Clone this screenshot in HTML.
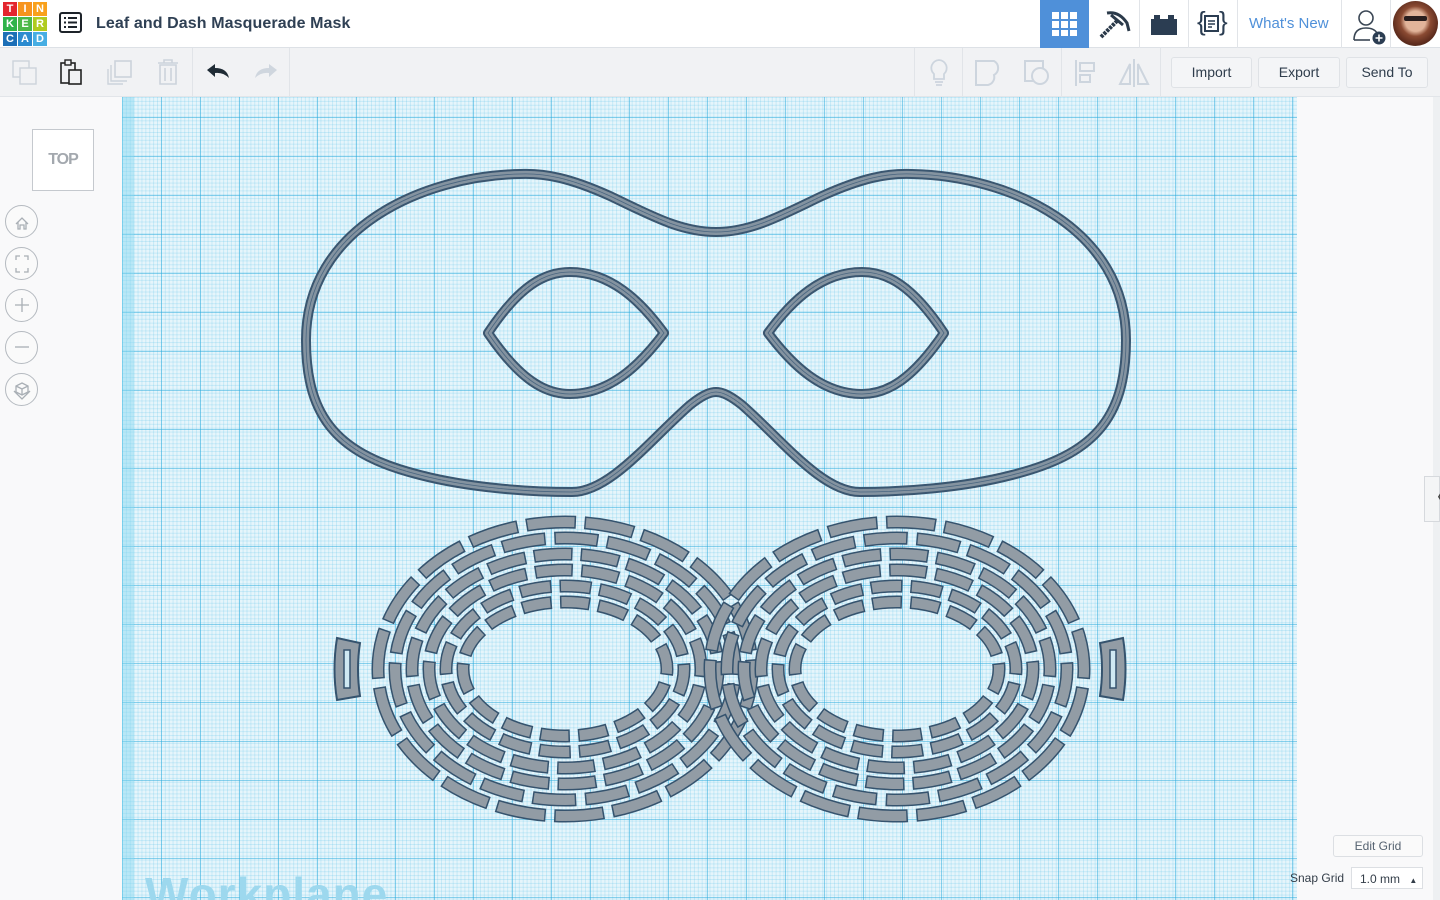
<!DOCTYPE html>
<html><head><meta charset="utf-8"><style>
*{margin:0;padding:0;box-sizing:border-box}
body{width:1440px;height:900px;overflow:hidden;background:#f9f9fa;font-family:"Liberation Sans",sans-serif;position:relative}
#top{position:absolute;left:0;top:0;width:1440px;height:48px;background:#fff;border-bottom:1px solid #dde1e6}
#tb{position:absolute;left:0;top:48px;width:1440px;height:49px;background:#f1f2f4;border-bottom:1px solid #e2e5e9}
.logo{position:absolute;left:3px;top:2px;display:grid;grid-template-columns:repeat(3,14px);grid-gap:1px}
.logo div{width:14px;height:14px;color:#fff;font:bold 11px "Liberation Sans",sans-serif;text-align:center;line-height:14px}
.title{position:absolute;left:96px;top:15px;font-size:16px;font-weight:bold;color:#2f4054;letter-spacing:.1px}
.btn{position:absolute;top:57px;height:31px;border:1px solid #dfe2e6;border-radius:3px;background:#f4f5f7;font-size:14px;color:#2f3d4c;text-align:center;line-height:29px}
.vd{position:absolute;width:1px;background:#e1e4e8}
#wp{position:absolute;left:122px;top:97px;width:1175px;height:803px;background-color:#e6f5fb;
background-image:
linear-gradient(90deg,rgba(40,170,220,.5) 1px,transparent 1px),
linear-gradient(rgba(40,170,220,.5) 1px,transparent 1px),
linear-gradient(90deg,rgba(80,190,230,.22) 1px,transparent 1px),
linear-gradient(rgba(80,190,230,.22) 1px,transparent 1px);
background-size:39px 39px,39px 39px,3.9px 3.9px,3.9px 3.9px;
background-position:39px 20px,39px 20px,0 0,0 0;overflow:hidden}
.circ{position:absolute;left:5px;width:33px;height:33px;border:1px solid #b5bac0;border-radius:50%;background:#fafafa}
</style></head><body>
<div id="top">
<div class="logo">
<div style="background:#e3262e">T</div><div style="background:#f7941d">I</div><div style="background:#f9a11b">N</div>
<div style="background:#2fb34a">K</div><div style="background:#4cb848">E</div><div style="background:#b0cb1f">R</div>
<div style="background:#1c6fb7">C</div><div style="background:#2b8bd0">A</div><div style="background:#47aee3">D</div>
</div>
<svg style="position:absolute;left:59px;top:12px" width="24" height="22" viewBox="0 0 24 22"><rect x="1" y="1" width="21" height="19" rx="2" fill="none" stroke="#1d232a" stroke-width="2"/><g fill="#1d232a"><rect x="5" y="5" width="2" height="2"/><rect x="9" y="5" width="9" height="2"/><rect x="5" y="9.5" width="2" height="2"/><rect x="9" y="9.5" width="9" height="2"/><rect x="5" y="14" width="2" height="2"/><rect x="9" y="14" width="9" height="2"/></g></svg>
<div class="title">Leaf and Dash Masquerade Mask</div>
<div style="position:absolute;left:1040px;top:0;width:49px;height:48px;background:#4f90d9"></div>
<svg style="position:absolute;left:1052px;top:12px" width="25" height="24"><g fill="#fff"><rect x="0" y="0" width="7" height="7"/><rect x="9" y="0" width="7" height="7"/><rect x="18" y="0" width="7" height="7"/><rect x="0" y="9" width="7" height="7"/><rect x="9" y="9" width="7" height="7"/><rect x="18" y="9" width="7" height="7"/><rect x="0" y="18" width="7" height="6"/><rect x="9" y="18" width="7" height="6"/><rect x="18" y="18" width="7" height="6"/></g></svg>
<svg style="position:absolute;left:1099px;top:9px" width="32" height="30"><path d="M2 28 L18 12" stroke="#2b3a4a" stroke-width="4" stroke-dasharray="3 1"/><path d="M8 4 Q20 2 28 14 L30 22 M12 6 L24 16" stroke="#2b3a4a" stroke-width="3" fill="none"/></svg>
<div class="vd" style="left:1139px;top:0;height:48px"></div>
<svg style="position:absolute;left:1151px;top:14px" width="26" height="21"><path d="M0 5h3v-4h6v4h8v-4h6v4h3v16h-26z" fill="#2b3d52"/></svg>
<div class="vd" style="left:1188px;top:0;height:48px"></div>
<div style="position:absolute;left:1197px;top:6px;font-size:26px;color:#2b3d52">{</div>
<div style="position:absolute;left:1219px;top:6px;font-size:26px;color:#2b3d52">}</div>
<svg style="position:absolute;left:1204px;top:15px" width="16" height="18"><rect x="1" y="1" width="13" height="15" fill="none" stroke="#2b3d52" stroke-width="2"/><path d="M4 6h7M4 9h7M4 12h4" stroke="#2b3d52" stroke-width="1.5"/></svg>
<div class="vd" style="left:1237px;top:0;height:48px"></div>
<div style="position:absolute;left:1249px;top:15px;font-size:15px;color:#4f90d9">What's New</div>
<div class="vd" style="left:1341px;top:0;height:48px"></div>
<svg style="position:absolute;left:1352px;top:9px" width="36" height="36"><circle cx="14" cy="9" r="7" fill="none" stroke="#3a4654" stroke-width="1.6"/><path d="M2 31 Q2 19 14 19 Q22 19 25 24" fill="none" stroke="#3a4654" stroke-width="1.6"/><path d="M2 31h16" stroke="#3a4654" stroke-width="1.6"/><circle cx="27" cy="29" r="6.5" fill="#2b3d52"/><path d="M27 25.5v7M23.5 29h7" stroke="#fff" stroke-width="1.6"/></svg>
<div class="vd" style="left:1390px;top:0;height:48px"></div>
<div style="position:absolute;left:1393px;top:1px;width:45px;height:45px;border-radius:50%;background:radial-gradient(circle at 50% 45%,#e2b49a 0 30%,#8a4a32 45%,#5a2a1c 70%,#7d8a6a 100%)"></div>
<div style="position:absolute;left:1404px;top:16px;width:23px;height:5px;background:#2a1e1e;border-radius:2px"></div>
</div>
<div id="tb">
<svg style="position:absolute;left:12px;top:12px" width="26" height="26"><rect x="1" y="1" width="16" height="16" fill="none" stroke="#ccd3db" stroke-width="1.4"/><rect x="8" y="8" width="16" height="16" fill="#f1f2f4" stroke="#ccd3db" stroke-width="1.4"/></svg>
<svg style="position:absolute;left:59px;top:10px" width="26" height="28"><rect x="2" y="5" width="14" height="20" fill="none" stroke="#222" stroke-width="1.6"/><rect x="6" y="2" width="6" height="5" fill="#f1f2f4" stroke="#222" stroke-width="1.4"/><rect x="10" y="12" width="12" height="14" fill="#f1f2f4" stroke="#222" stroke-width="1.6"/></svg>
<svg style="position:absolute;left:106px;top:11px" width="28" height="28"><rect x="9" y="2" width="16" height="16" fill="none" stroke="#ccd3db" stroke-width="1.6"/><path d="M5 6v16h16M2 10v15h15" fill="none" stroke="#ccd3db" stroke-width="1.4"/></svg>
<svg style="position:absolute;left:156px;top:10px" width="24" height="28"><path d="M2 5h20M8 5V2h8v3M4 7h16v19H4z M9 10v13M15 10v13" fill="none" stroke="#ccd3db" stroke-width="1.6"/></svg>
<div class="vd" style="left:192px;top:0;height:48px"></div>
<svg style="position:absolute;left:205px;top:14px" width="26" height="18"><path d="M2 8 L10 2 V6 Q22 6 24 16 Q18 10 10 11 V15 Z" fill="#1f2b35"/></svg>
<svg style="position:absolute;left:253px;top:14px" width="26" height="18"><path d="M24 8 L16 2 V6 Q4 6 2 16 Q8 10 16 11 V15 Z" fill="#cfd6de"/></svg>
<div class="vd" style="left:289px;top:0;height:48px"></div>
<div class="vd" style="left:914px;top:0;height:48px"></div>
<svg style="position:absolute;left:928px;top:10px" width="22" height="30"><path d="M11 2a8 8 0 0 0-5 14v5h10v-5a8 8 0 0 0-5-14zM7 24h8M8 27h6" fill="none" stroke="#cdd5de" stroke-width="1.8"/></svg>
<div class="vd" style="left:962px;top:0;height:48px"></div>
<svg style="position:absolute;left:974px;top:11px" width="30" height="28"><path d="M2 2h18a8 8 0 0 1 0 14 8 8 0 0 1-6 10H2z" fill="none" stroke="#cdd5de" stroke-width="2"/></svg>
<svg style="position:absolute;left:1023px;top:11px" width="30" height="28"><rect x="2" y="2" width="18" height="20" fill="none" stroke="#cdd5de" stroke-width="2"/><circle cx="17" cy="17" r="8" fill="#f1f2f4" stroke="#cdd5de" stroke-width="2"/></svg>
<div class="vd" style="left:1061px;top:0;height:48px"></div>
<svg style="position:absolute;left:1073px;top:10px" width="26" height="30"><path d="M3 2v26" stroke="#cdd5de" stroke-width="2"/><rect x="7" y="5" width="14" height="8" fill="none" stroke="#cdd5de" stroke-width="2"/><rect x="7" y="17" width="10" height="7" fill="none" stroke="#cdd5de" stroke-width="2"/></svg>
<svg style="position:absolute;left:1117px;top:10px" width="34" height="30"><path d="M17 1v28M13 6L3 26h10zM21 6l10 20H21z" fill="none" stroke="#cdd5de" stroke-width="2"/></svg>
<div class="vd" style="left:1160px;top:0;height:48px"></div>
<div class="btn" style="left:1171px;width:81px;top:9px">Import</div>
<div class="btn" style="left:1258px;width:82px;top:9px">Export</div>
<div class="btn" style="left:1346px;width:82px;top:9px">Send To</div>
</div>
<div id="wp">
<div style="position:absolute;left:0;top:0;width:12px;height:803px;background:rgba(130,215,240,.45)"></div>
<div style="position:absolute;left:23px;top:770px;font:bold 46px 'Liberation Sans',sans-serif;color:#9dd8ee;letter-spacing:1px">Workplane</div>
</div>
<svg style="position:absolute;left:0;top:0" width="1440" height="900">
<defs>
<path id="m" d="M716,232 C680,232 650,215 610,196 C570,178 545,173 520,174 C420,176 306,230 306,340 C306,420 340,455 420,475 C470,488 530,492 572,492 C610,492 650,440 690,405 C705,393 712,392 716,392 C720,392 727,393 742,405 C782,440 822,492 860,492 C902,492 962,488 1012,475 C1092,455 1126,420 1126,340 C1126,230 1012,176 912,174 C887,173 862,178 822,196 C782,215 752,232 716,232Z"/>
<path id="e1" d="M488,333 C520,285 545,272 570,272 C610,272 640,300 664,333 C640,365 610,394 570,394 C545,394 520,380 488,333Z"/>
<path id="e2" d="M944,333 C912,285 887,272 862,272 C822,272 792,300 768,333 C792,365 822,394 862,394 C887,394 912,380 944,333Z"/>
</defs>
<g fill="none" stroke-linejoin="round">
<g stroke="#3a5670" stroke-width="10"><use href="#m"/><use href="#e1"/><use href="#e2"/></g>
<g stroke="#8493a0" stroke-width="6"><use href="#m"/><use href="#e1"/><use href="#e2"/></g>
<g stroke="#4a6680" stroke-width="0.8"><use href="#m"/><use href="#e1"/><use href="#e2"/></g>
</g>
<g fill="none">
<g id="lobe">
<g stroke="#35536e" stroke-width="13">
<ellipse cx="565" cy="669" rx="187" ry="147" stroke-dasharray="50 8.5" stroke-dashoffset="10"/>
<ellipse cx="565" cy="669" rx="170" ry="131" stroke-dasharray="44 8.8" stroke-dashoffset="38"/>
<ellipse cx="565" cy="669" rx="153" ry="115" stroke-dasharray="39 8" stroke-dashoffset="8"/>
<ellipse cx="565" cy="669" rx="136" ry="99" stroke-dasharray="38 8.4" stroke-dashoffset="30"/>
<ellipse cx="565" cy="669" rx="119" ry="83" stroke-dasharray="32 8" stroke-dashoffset="6"/>
<ellipse cx="565" cy="669" rx="102" ry="67" stroke-dasharray="30 8.3" stroke-dashoffset="24"/>
</g>
<g stroke="#929ca5" stroke-width="10">
<ellipse cx="565" cy="669" rx="187" ry="147" stroke-dasharray="47 11.5" stroke-dashoffset="8.5"/>
<ellipse cx="565" cy="669" rx="170" ry="131" stroke-dasharray="41 11.8" stroke-dashoffset="36.5"/>
<ellipse cx="565" cy="669" rx="153" ry="115" stroke-dasharray="36 11" stroke-dashoffset="6.5"/>
<ellipse cx="565" cy="669" rx="136" ry="99" stroke-dasharray="35 11.4" stroke-dashoffset="28.5"/>
<ellipse cx="565" cy="669" rx="119" ry="83" stroke-dasharray="29 11" stroke-dashoffset="4.5"/>
<ellipse cx="565" cy="669" rx="102" ry="67" stroke-dasharray="27 11.3" stroke-dashoffset="22.5"/>
</g>
</g>
<use href="#lobe" transform="translate(1462,0) scale(-1,1)"/>
</g>
<g fill="#929ca5" stroke="#35536e" stroke-width="2">
<path d="M337,638 L360,643 Q356,669 360,696 L337,700 Q332,669 337,638Z"/>
<path d="M1123,638 L1100,643 Q1104,669 1100,696 L1123,700 Q1128,669 1123,638Z"/>
</g>
<g fill="#cfe9f3" stroke="#35536e" stroke-width="1.5"><rect x="344" y="650" width="6" height="38"/><rect x="1110" y="650" width="6" height="38"/></g>
</svg>
<div style="position:absolute;left:32px;top:129px;width:62px;height:62px;border:1px solid #c5c9ce;background:#fff;text-align:center;line-height:60px;font-size:16px;font-weight:bold;color:#a3a8ae;letter-spacing:-1px">TOP</div>
<div class="circ" style="top:205px"></div><div class="circ" style="top:247px"></div><div class="circ" style="top:289px"></div><div class="circ" style="top:331px"></div><div class="circ" style="top:373px"></div>
<svg style="position:absolute;left:5px;top:205px" width="34" height="202" fill="none" stroke="#a9afb5" stroke-width="1.3">
<path d="M11 19l6-6 6 6M13 17v7h2v-4h4v4h2v-7"/>
<path d="M11 55v-4h4M19 51h4v4M23 63v4h-4M15 67h-4v-4"/>
<path d="M17 93v14M10 100h14"/>
<path d="M10 142h14"/>
<path d="M17 178l6 3v6l-6 3-6-3v-6zM11 181l6 3 6-3M17 184v6M9 186l8 8 8-8"/>
</svg>
<div style="position:absolute;left:1433px;top:97px;width:7px;height:803px;background:#eef0f2"></div>
<div style="position:absolute;left:1424px;top:476px;width:16px;height:46px;border:1px solid #d6d9dd;background:#f4f5f6;color:#444;font-size:22px;line-height:42px;text-align:center">〈</div>
<div style="position:absolute;left:1333px;top:835px;width:90px;height:22px;border:1px solid #dcdfe3;border-radius:3px;background:#fafafa;font-size:12px;color:#556270;text-align:center;line-height:20px">Edit Grid</div>
<div style="position:absolute;left:1290px;top:871px;font-size:12px;color:#333d48">Snap Grid</div>
<div style="position:absolute;left:1351px;top:867px;width:72px;height:22px;border:1px solid #dcdfe3;background:#fff;font-size:12px;color:#333d48;line-height:22px;padding-left:8px">1.0 mm <span style="font-size:8px;margin-left:6px">▲</span></div>
</body></html>
